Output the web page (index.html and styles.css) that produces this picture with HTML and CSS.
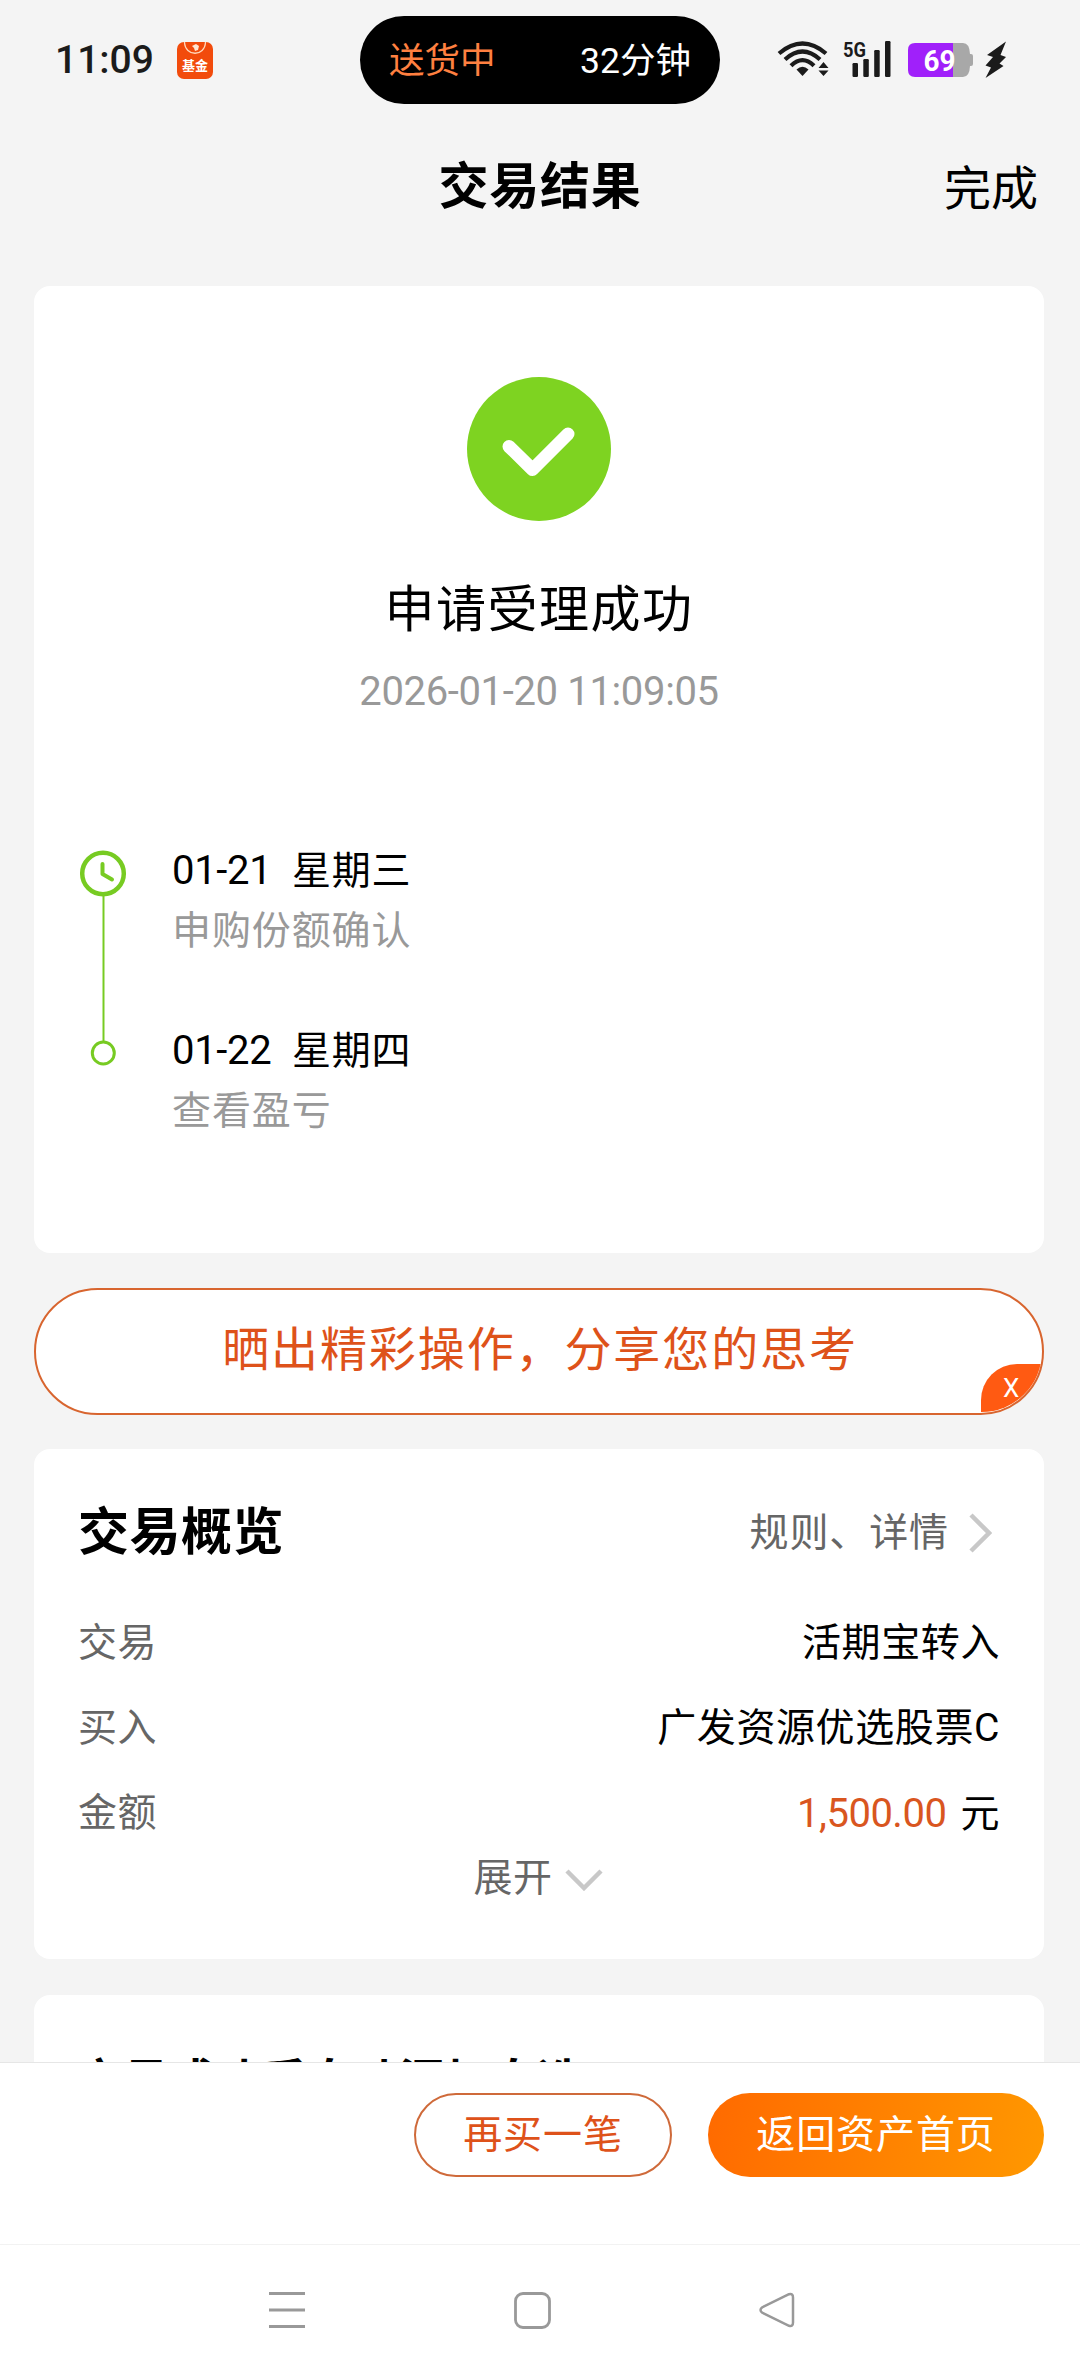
FILE: index.html
```html
<!DOCTYPE html>
<html lang="zh-CN">
<head>
<meta charset="utf-8">
<title>交易结果</title>
<link rel="stylesheet" href="styles.css">
</head>
<body>
<div class="screen">
  <div class="status">
    <div class="status-left">
      <span class="clock">11:09</span>
      <span class="app-badge">
        <svg class="app-mark" width="36" height="14" viewBox="0 0 36 14"><path d="M7.5 0C8 15 28 15 28.500 0" fill="none" stroke="#ffd9bd" stroke-width="1.300"/><path d="M15 4l4-2 3 2-1 4-3 1-1-3z" fill="#ffe6d2"/></svg>
        <span class="app-name">基金</span>
      </span>
    </div>
    <div class="island"><span class="island-state">送货中</span><span class="island-time">32分钟</span></div>
    <div class="status-right">
      <svg class="wifi" width="52" height="38" viewBox="0 0 52 38" fill="none" stroke="#1b1b1b" stroke-width="4.200">
        <path d="M2 12.500Q25.500 -7.500 49 12.500"/><path d="M8 18.500Q25.500 2.500 43 18.500"/><path d="M14 24.800Q25.500 13.500 37 24.800"/>
        <path d="M19.500 28.500Q25.500 23 31.500 28.500L25.500 35z" fill="#1b1b1b" stroke="none"/>
        <path d="M41.500 27l5-6 5 6zM41.500 29.500l5 5.500 5-5.500z" fill="#1b1b1b" stroke="none"/>
      </svg>
      <svg class="signal" width="50" height="38" viewBox="0 0 50 38" fill="#1b1b1b">
        <text x="0" y="15.500" class="net" textLength="23" lengthAdjust="spacingAndGlyphs">5G</text>
        <rect x="9.500" y="22" width="5.500" height="14" rx="1.200"/><rect x="20.300" y="18" width="5.500" height="18" rx="1.200"/><rect x="31.200" y="9" width="5.500" height="27" rx="1.200"/><rect x="42" y="0" width="5.500" height="36" rx="1.200"/>
      </svg>
      <svg class="battery" width="67" height="36" viewBox="0 0 67 36">
        <path d="M8 1H46V35H8Q1 35 1 28V8Q1 1 8 1Z" fill="#a020fa"/>
        <path d="M46 1H56Q62.500 1 63 12H64Q66 12 66 14V22Q66 24 64 24H63Q62.500 35 56 35H46Z" fill="#a8a8a8"/>
        <text x="16.500" y="28.500" class="level" textLength="32" lengthAdjust="spacingAndGlyphs">69</text>
      </svg>
      <svg class="bolt" width="22" height="38" viewBox="0 0 22 38"><path d="M21 0.500L2 14L8 16L0.500 24.500L6 26.500L0.500 37L18.500 25L14.500 22.500L21 16L15.500 14Z" fill="#1b1b1b"/></svg>
    </div>
  </div>

  <div class="titlebar"><span></span><h1>交易结果</h1><a class="done">完成</a></div>

  <main class="content">
    <section class="card result">
      <svg width="144" height="144" viewBox="0 0 144 144"><circle cx="72" cy="72" r="72" fill="#7ed321"/><path d="M42 69.500L65.500 92.500L101 57" fill="none" stroke="#fff" stroke-width="13" stroke-linecap="round" stroke-linejoin="round"/></svg>
      <h2>申请受理成功</h2>
      <p class="time">2026-01-20 11:09:05</p>
      <div class="steps">
        <svg width="48" height="220" viewBox="0 0 48 220" fill="none" stroke="#77cb22">
          <circle cx="24" cy="23.500" r="20.800" stroke-width="4.500"/>
          <path d="M23.500 14V24L33 29.500" stroke-width="4" stroke-linecap="round" stroke-linejoin="round"/>
          <path d="M24.500 46V192" stroke-width="2"/>
          <circle cx="24.300" cy="203" r="11" stroke-width="3"/>
        </svg>
        <ol>
          <li><div class="day"><span class="date">01-21</span><span>星期三</span></div><div class="note">申购份额确认</div></li>
          <li><div class="day"><span class="date">01-22</span><span>星期四</span></div><div class="note">查看盈亏</div></li>
        </ol>
      </div>
    </section>

    <div class="share"><span class="share-text">晒出精彩操作，分享您的思考</span><span class="clip"><span class="close">X</span></span></div>

    <section class="card overview">
      <div class="head"><h3>交易概览</h3><a class="rules">规则、详情<svg width="24" height="40" viewBox="0 0 24 40"><path d="M3 2L21 20L3 38" fill="none" stroke="#c8c8c8" stroke-width="4.500"/></svg></a></div>
      <dl>
        <div><dt>交易</dt><dd>活期宝转入</dd></div>
        <div><dt>买入</dt><dd>广发资源优选股票C</dd></div>
        <div><dt>金额</dt><dd><b>1,500.00</b>元</dd></div>
      </dl>
      <a class="expand">展开<svg width="38" height="22" viewBox="0 0 38 22"><path d="M2 2L19 19L36 2" fill="none" stroke="#c8c8c8" stroke-width="4.500"/></svg></a>
    </section>

    <section class="card follow"><h4>交易成功后自动添加自选</h4></section>
  </main>

  <footer class="actions"><a class="btn outline">再买一笔</a><a class="btn solid">返回资产首页</a></footer>

  <nav class="sysnav">
    <svg width="36" height="36" viewBox="0 0 36 36" stroke="#999" stroke-width="3"><path d="M0 1.500H36M0 18H36M0 34.500H36"/></svg>
    <svg width="37" height="37" viewBox="0 0 37 37"><rect x="1.500" y="1.500" width="34" height="34" rx="7.500" fill="none" stroke="#999" stroke-width="2.800"/></svg>
    <svg width="36" height="36" viewBox="0 0 36 36"><path d="M30 2.200L3 15.500Q0 18 3 20.500L30 33.800Q34 35 34 30.500V5.500Q34 1 30 2.200Z" fill="none" stroke="#999" stroke-width="2.500"/></svg>
  </nav>
</div>
</body>
</html>
```
FILE: styles.css
```css
* { box-sizing: border-box; margin: 0; padding: 0; }
body { font-family: Roboto, "Noto Sans CJK SC", sans-serif; background: #f4f4f4; color: #000; }
svg { display: block; flex: none; }
.screen { width: 1080px; height: 2376px; display: flex; flex-direction: column; overflow: hidden; }

.status { height: 104px; padding-top: 16px; display: flex; align-items: center; flex: none; }
.status-left { width: 360px; padding-left: 55px; display: flex; align-items: center; }
.clock { width: 122px; font-size: 39px; font-weight: 500; line-height: 44px; margin-top: -1px; color: #1b1b1b; }
.app-badge { width: 36px; height: 37px; border-radius: 7px; background: #f24b0c; display: flex; flex-direction: column; align-items: center; }
.app-name { font-size: 13px; line-height: 20px; font-weight: 700; color: #fff; }
.island { width: 360px; height: 88px; border-radius: 44px; background: #000; display: flex; justify-content: space-between; align-items: center; padding: 2px 29px 0 29px; font-size: 35.500px; line-height: 50px; }
.island-state { color: #ff8040; }
.island-time { color: #fff; }
.status-right { display: flex; align-items: center; padding-left: 57px; }
.signal { margin-left: 14px; overflow: visible; }
.net { font: 700 21px Roboto, sans-serif; }
.battery { margin-left: 14px; }
.level { font: 700 29px Roboto, sans-serif; fill: #fff; }
.bolt { margin-left: 11px; }

.titlebar { height: 182px; padding: 52px 42px 0; display: grid; grid-template-columns: 1fr auto 1fr; align-items: start; flex: none; }
.titlebar h1 { font-size: 50px; line-height: 62px; letter-spacing: 0.800px; font-weight: 700; }
.done { justify-self: end; font-size: 47px; line-height: 66px; }

.content { height: 1776px; padding: 0 36px 0 34px; overflow: hidden; flex: none; }
.card { background: #fff; border-radius: 16px; }
.result { height: 967px; padding-top: 91px; display: flex; flex-direction: column; align-items: center; }
.result h2 { margin-top: 55px; font-size: 50px; line-height: 68px; letter-spacing: 1.500px; font-weight: 400; }
.time { margin-top: 24px; font-size: 40px; line-height: 48px; letter-spacing: -0.350px; color: #999; }
.steps { align-self: stretch; margin-top: 134px; padding-left: 45px; display: flex; }
.steps ol { list-style: none; margin-left: 45px; padding-top: 1px; }
.steps li { height: 180px; }
.day { display: flex; font-size: 39px; line-height: 40px; letter-spacing: 0.700px; }
.date { width: 120px; font-size: 40px; letter-spacing: -0.300px; }
.note { margin-top: 19px; font-size: 39px; line-height: 42px; letter-spacing: 0.900px; color: #999; }

.share { position: relative; height: 127px; margin: 35px 0 34px; border: 2px solid #d8652f; border-radius: 64px; background: #fff; color: #de521a; font-size: 47px; letter-spacing: 1.900px; display: flex; align-items: flex-start; justify-content: center; }
.share-text { line-height: 60px; margin: 30px 0 0 2px; }
.clip { position: absolute; inset: 1px 0; border-radius: 62px; overflow: hidden; }
.close { position: absolute; right: 0; bottom: 0; width: 61px; height: 48px; border-top-left-radius: 36px; background: #ff5a12; color: #fff; font-size: 26px; line-height: 48px; padding-left: 22px; letter-spacing: 0; }

.overview { height: 510px; padding: 52px 44px 0 44px; display: flex; flex-direction: column; }
.head { display: flex; justify-content: space-between; align-items: center; height: 64px; line-height: 64px; }
.head h3 { font-size: 51px; letter-spacing: 0.500px; font-weight: 700; }
.rules { display: flex; align-items: center; gap: 19px; margin-right: 8px; font-size: 39px; letter-spacing: 0.900px; color: #666; }
dl { margin-top: 36px; }
dl div { display: flex; justify-content: space-between; height: 85px; line-height: 85px; font-size: 39px; }
dt { color: #666; letter-spacing: 0.500px; }
dd { letter-spacing: 0.600px; }
dd b { font-weight: 400; font-size: 40px; letter-spacing: -0.500px; color: #d9561f; margin-right: 14px; }
.expand { display: flex; align-self: center; align-items: center; gap: 12px; margin: -2px 2px 0 0; height: 48px; line-height: 48px; font-size: 39px; letter-spacing: 0.500px; color: #666; }
.expand svg { margin-top: 4px; }

.follow { margin-top: 36px; height: 200px; padding: 58px 43px; }
.follow h4 { font-size: 46px; line-height: 56px; font-weight: 700; }

.actions { height: 182px; border-top: 1px solid #e6e6e6; background: #fff; padding: 30px 36px 0; display: flex; justify-content: flex-end; gap: 36px; flex: none; }
.btn { height: 84px; border-radius: 42px; text-align: center; font-size: 39px; line-height: 84px; letter-spacing: 0.900px; }
.outline { width: 258px; border: 2px solid #cf6a3a; line-height: 80px; color: #de521a; }
.solid { width: 336px; background: linear-gradient(100deg, #ff6a00, #ff9800); color: #fff; }

.sysnav { height: 132px; border-top: 1px solid #f2f2f2; background: #fff; padding: 47px 285px 0 269px; display: flex; justify-content: space-between; flex: none; }
```
